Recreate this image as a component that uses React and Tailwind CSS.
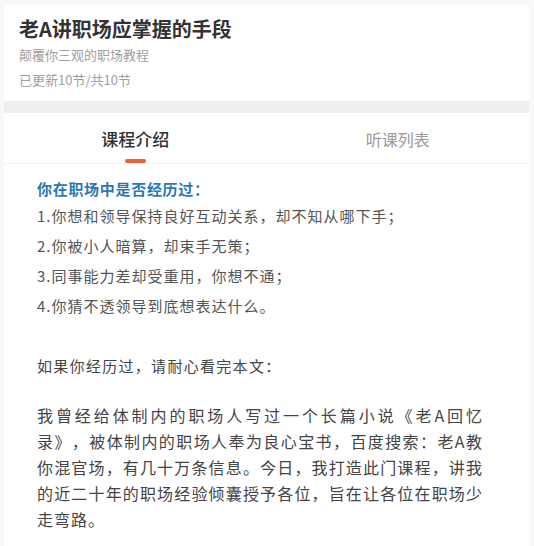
import React from "react";

const font = { fontFamily: '"Noto Sans CJK SC", "Noto Sans", sans-serif' };

export default function App() {
  const list = [
    "1.你想和领导保持良好互动关系，却不知从哪下手；",
    "2.你被小人暗算，却束手无策；",
    "3.同事能力差却受重用，你想不通；",
    "4.你猜不透领导到底想表达什么。",
  ];
  const para = [
    "我曾经给体制内的职场人写过一个长篇小说《老A回忆",
    "录》，被体制内的职场人奉为良心宝书，百度搜索：老A教",
    "你混官场，有几十万条信息。今日，我打造此门课程，讲我",
    "的近二十年的职场经验倾囊授予各位，旨在让各位在职场少",
  ];
  return (
    <div
      className="min-h-[546px] bg-[#f8f8f8] pl-[4px] pr-[5px] pt-[5px] [text-spacing-trim:space-all]"
      style={font}
    >
      <div className="h-[96px] bg-white px-[15px] pt-[10px]">
        <div className="text-[20px] font-bold leading-[28px] text-[#333]">
          老A讲职场应掌握的手段
        </div>
        <div className="mt-[2px] text-[13px] leading-[20px] text-[#a0a0a0]">
          颠覆你三观的职场教程
        </div>
        <div className="mt-[5px] text-[13px] leading-[20px] text-[#a0a0a0]">
          已更新10节/共10节
        </div>
      </div>
      <div className="h-[12px] bg-[#efefef]" />
      <div className="min-h-[433px] bg-white">
        <div className="grid h-[51px] grid-cols-2 border-b border-[#f3f3f3]">
          <div className="flex flex-col items-center pt-[14px]">
            <div className="text-[17px] font-medium leading-[24px] text-[#333]">
              课程介绍
            </div>
            <div className="mt-[8px] h-[4px] w-[21px] rounded-[2px] bg-[#e8603c]" />
          </div>
          <div className="flex flex-col items-center pt-[14px]">
            <div className="text-[16px] leading-[24px] text-[#999]">听课列表</div>
          </div>
        </div>
        <div className="pl-[33px] pr-[46px] pt-[13px]">
          <div className="text-[15px] font-bold leading-[24px] tracking-[0.7px] text-[#2b78b4]">
            你在职场中是否经历过：
          </div>
          <div className="text-[15px] leading-[30px] tracking-[1px] text-[#555]">
            {list.map((l) => (
              <div key={l}>{l}</div>
            ))}
          </div>
          <div className="mt-[30px] text-[15px] leading-[30px] tracking-[1.3px] text-[#444]">
            如果你经历过，请耐心看完本文：
          </div>
          <div className="mt-[21px] text-[16px] leading-[26px] tracking-[1px] text-[#444]">
            {para.map((l) => (
              <div key={l} className="text-justify [text-align-last:justify]">
                {l}
              </div>
            ))}
            <div>走弯路。</div>
          </div>
        </div>
      </div>
    </div>
  );
}
